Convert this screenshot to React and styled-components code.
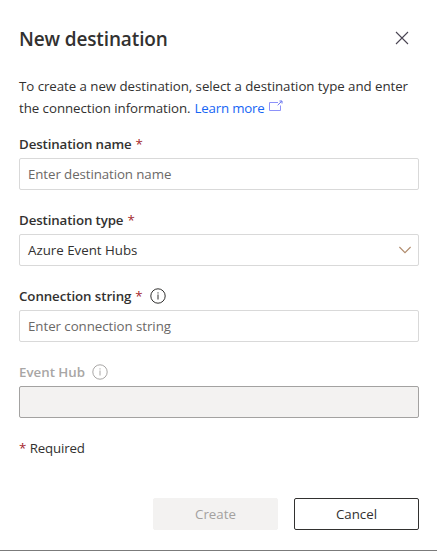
import React from 'react';
import styled, { createGlobalStyle, css } from 'styled-components';

const GlobalStyle = createGlobalStyle`
  * { box-sizing: border-box; }
  body {
    margin: 0;
    background: #fff;
    color: #323130;
    font-family: "Open Sans", "Noto Sans", sans-serif;
    font-size: 13.3px;
    line-height: 20px;
  }
`;

const Panel = styled.main`
  display: flex;
  flex-direction: column;
  width: 437px;
  height: 551px;
  padding: 24px 18px 0 19px;
  background: #fff;
  border-bottom: 1px solid #7b7b7b;
  overflow: hidden;
`;

const Header = styled.header`
  display: flex;
  justify-content: space-between;
  align-items: center;
  height: 30px;
`;

const Title = styled.h1`
  margin: 0;
  font-size: 19px;
  font-weight: 600;
  line-height: 30px;
  letter-spacing: -0.13px;
  white-space: nowrap;
`;

const CloseButton = styled.button`
  display: flex;
  align-items: center;
  justify-content: center;
  width: 32px;
  height: 32px;
  margin: -2px 1px 0 0;
  padding: 0;
  border: 0;
  background: transparent;
  color: #4a4553;
`;

const Intro = styled.p`
  display: flex;
  flex-direction: column;
  margin: 21px 0 0;
  line-height: 22px;
  white-space: nowrap;
`;

const Line = styled.span`
  display: flex;
  align-items: center;
  height: 22px;
`;

const Text = styled.span`
  letter-spacing: ${(p) => p.$tracking || 'normal'};
`;

const Link = styled.a`
  display: inline-flex;
  align-items: center;
  margin-left: 4px;
  gap: 4px;
  color: #1665f5;
  text-decoration: none;

  svg { margin-top: -5px; color: #8d92fa; }
`;

const Form = styled.form`
  display: flex;
  flex-direction: column;
  gap: 20px;
  margin-top: 15px;
`;

const Field = styled.div`
  display: flex;
  flex-direction: column;
  gap: 4px;
`;

const Label = styled.label`
  display: flex;
  align-items: center;
  height: 20px;
  font-weight: 600;
  white-space: nowrap;
  color: ${(p) => (p.$disabled ? '#a8a6a5' : '#323130')};

  svg { margin-left: 7px; }
`;

const Star = styled.span`
  margin-left: ${(p) => p.$gap || '4px'};
  font-weight: 400;
  color: #a4262c;
`;

const box = css`
  width: 400px;
  height: 32px;
  padding: 0 8px;
  border: 1px solid #d9d9d9;
  border-radius: 2px;
  background: #fff;
  color: #323130;
  font: inherit;
`;

const Input = styled.input`
  ${box}
  letter-spacing: ${(p) => p.$tracking || 'normal'};

  &::placeholder { color: #6b6967; opacity: 1; }
  &:disabled { border-color: #a3a2a1; background: #f3f2f1; }
`;

const Select = styled.div`
  ${box}
  display: flex;
  align-items: center;
  justify-content: space-between;
  padding-right: 7px;
`;

const Required = styled.div`
  display: flex;
  height: 20px;
  margin-top: 20px;
`;

const Actions = styled.footer`
  display: flex;
  justify-content: flex-end;
  gap: 16px;
  margin-top: 40px;
`;

const Button = styled.button`
  width: 125px;
  height: 32px;
  padding: 0;
  border: 1px solid #323130;
  border-radius: 2px;
  background: #fff;
  color: #323130;
  font: inherit;

  &:disabled { border-color: #f3f2f1; background: #f3f2f1; color: #a3a19f; }
`;

const CloseIcon = () => (
  <svg width="14" height="14" viewBox="0 0 14 14" fill="none" stroke="currentColor" strokeWidth="1.1">
    <path d="M1 1l12 12M13 1L1 13" />
  </svg>
);

const ExternalIcon = () => (
  <svg width="14" height="12" viewBox="0 0 14 12" fill="none" stroke="currentColor">
    <path d="M9 2.5H.5v8h11V5.5" />
    <path d="M8.7 5.2L12.6 1.3M10.5 1h2.5v2.5" stroke="#6672ee" />
  </svg>
);

const ChevronIcon = () => (
  <svg width="12" height="8" viewBox="0 0 12 8" fill="none" stroke="#b08b6c" strokeWidth="1.1">
    <path d="M.4 1L6 6.6 11.6 1" />
  </svg>
);

const InfoIcon = () => (
  <svg width="16" height="16" viewBox="0 0 16 16" fill="none" stroke="currentColor">
    <circle cx="8" cy="8" r="7.2" />
    <path d="M8 6.5V11.5M8 4.3v1.2" />
  </svg>
);

export default function App() {
  return (
    <>
      <GlobalStyle />
      <Panel>
        <Header>
          <Title>New destination</Title>
          <CloseButton aria-label="Close"><CloseIcon /></CloseButton>
        </Header>
        <Intro>
          <Line>
            <Text $tracking="-0.05px">To create a new destination, select a destination type and enter</Text>
          </Line>
          <Line>
            <Text $tracking="-0.05px">the connection information.</Text>
            <Link href="#">
              <Text $tracking="-0.2px">Learn more</Text>
              <ExternalIcon />
            </Link>
          </Line>
        </Intro>
        <Form>
          <Field>
            <Label htmlFor="name"><Text $tracking="-0.12px">Destination name</Text><Star>*</Star></Label>
            <Input id="name" placeholder="Enter destination name" $tracking="-0.09px" />
          </Field>
          <Field>
            <Label><Text $tracking="-0.12px">Destination type</Text><Star>*</Star></Label>
            <Select role="combobox" tabIndex={0}>
              <Text>Azure Event Hubs</Text>
              <ChevronIcon />
            </Select>
          </Field>
          <Field>
            <Label htmlFor="conn"><Text $tracking="-0.08px">Connection string</Text><Star>*</Star><InfoIcon /></Label>
            <Input id="conn" placeholder="Enter connection string" $tracking="-0.05px" />
          </Field>
          <Field>
            <Label htmlFor="hub" $disabled><Text>Event Hub</Text><InfoIcon /></Label>
            <Input id="hub" disabled />
          </Field>
        </Form>
        <Required>
          <Star $gap="0">*</Star>
          <Text $tracking="-0.15px">&nbsp;Required</Text>
        </Required>
        <Actions>
          <Button type="button" disabled>Create</Button>
          <Button type="button">Cancel</Button>
        </Actions>
      </Panel>
    </>
  );
}
